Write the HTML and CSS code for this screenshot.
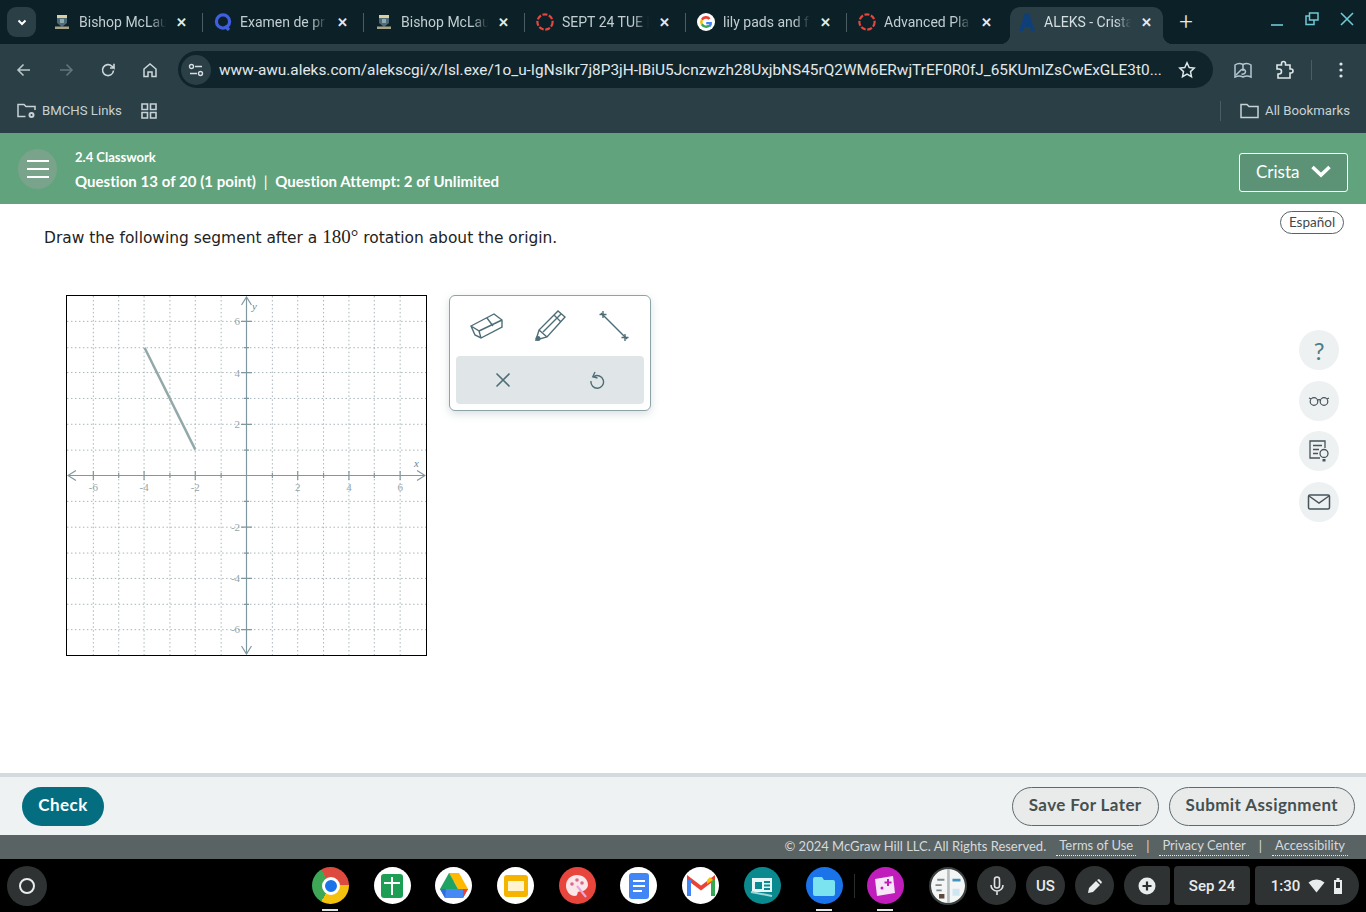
FILE: index.html
```html
<!DOCTYPE html>
<html lang="en">
<head>
    <meta charset="UTF-8">
    <meta name="viewport" content="width=device-width, initial-scale=1.0">
    <title>ALEKS - Crista</title>
    <link rel="stylesheet" href="styles.css">
</head>
<body>
    <!-- browser tabs -->
    <div class="tabstrip">
        <button class="tab-search"><svg width="12" height="12" viewBox="0 0 12 12"><path d="M2.500 4.500 6 8l3.500-3.500" fill="none" stroke="#fff" stroke-width="2"/></svg></button>
        <div class="tab">
            <svg class="favicon" viewBox="0 0 16 16"><path d="M3 1h10v8l-5 4-5-4z" fill="#4d6a78"/><path d="M3 1h10v3H3z" fill="#d8d0a0"/><path d="M6 5h4v4H6z" fill="#8fa7b0"/><path d="M1 12.500h14v2.500H1z" fill="#a8a487"/></svg>
            <span class="tab-title">Bishop McLau</span>
            <span class="tab-close">✕</span><i class="tab-sep"></i>
        </div>
        <div class="tab">
            <svg class="favicon big" viewBox="0 0 18 18"><circle cx="9" cy="8.500" r="6.600" fill="none" stroke="#3f5fe0" stroke-width="3.200"/><path d="M11 13l4 4" stroke="#3f5fe0" stroke-width="3.200"/></svg>
            <span class="tab-title">Examen de pr</span>
            <span class="tab-close">✕</span><i class="tab-sep"></i>
        </div>
        <div class="tab">
            <svg class="favicon" viewBox="0 0 16 16"><path d="M3 1h10v8l-5 4-5-4z" fill="#4d6a78"/><path d="M3 1h10v3H3z" fill="#d8d0a0"/><path d="M6 5h4v4H6z" fill="#8fa7b0"/><path d="M1 12.500h14v2.500H1z" fill="#a8a487"/></svg>
            <span class="tab-title">Bishop McLau</span>
            <span class="tab-close">✕</span><i class="tab-sep"></i>
        </div>
        <div class="tab">
            <svg class="favicon big" viewBox="0 0 18 18"><circle cx="9" cy="9" r="7.600" fill="none" stroke="#e8453c" stroke-width="2.200" stroke-dasharray="5 1.600"/></svg>
            <span class="tab-title">SEPT 24 TUE |</span>
            <span class="tab-close">✕</span><i class="tab-sep"></i>
        </div>
        <div class="tab">
            <svg class="favicon big" viewBox="0 0 18 18"><circle cx="9" cy="9" r="9" fill="#fff"/><path d="M13.600 5.200A6 6 0 0 0 3.900 6l2 1.500a3.500 3.500 0 0 1 5.600-.7z" fill="#ea4335"/><path d="M3.900 6a6 6 0 0 0 0 6l2-1.500a3.500 3.500 0 0 1 0-3z" fill="#fbbc05"/><path d="M3.900 12a6 6 0 0 0 9.300 1.200l-1.900-1.500a3.500 3.500 0 0 1-5.400-1.200z" fill="#34a853"/><path d="M15 9H9.200v2.200h3.200a3 3 0 0 1-1.100 1.500l1.900 1.500A6 6 0 0 0 15 9z" fill="#4285f4"/></svg>
            <span class="tab-title">lily pads and f</span>
            <span class="tab-close">✕</span><i class="tab-sep"></i>
        </div>
        <div class="tab">
            <svg class="favicon big" viewBox="0 0 18 18"><circle cx="9" cy="9" r="7.600" fill="none" stroke="#e8453c" stroke-width="2.200" stroke-dasharray="5 1.600"/></svg>
            <span class="tab-title">Advanced Pla</span>
            <span class="tab-close">✕</span>
        </div>
        <div class="tab active">
            <svg class="favicon big" viewBox="0 0 18 18"><path d="M7 0h4l6 18h-4l-1-4H6l-1 4H1z" fill="#0f3f78"/></svg>
            <span class="tab-title">ALEKS - Crista</span>
            <span class="tab-close">✕</span>
        </div>
        <span class="new-tab">+</span>
        <div class="win-controls">
            <svg width="14" height="14" viewBox="0 0 14 14"><path d="M1 13h12" stroke="#6fc9d6" stroke-width="1.600"/></svg>
            <svg width="14" height="14" viewBox="0 0 14 14"><path d="M4.500 1h8.500v7H4.500zM4.500 4H1v8.500h8V8" fill="none" stroke="#6fc9d6" stroke-width="1.500"/></svg>
            <svg width="14" height="14" viewBox="0 0 14 14"><path d="M1 1l12 12M13 1 1 13" stroke="#6fc9d6" stroke-width="1.600"/></svg>
        </div>
    </div>

    <!-- address bar -->
    <div class="toolbar">
        <svg class="nav-icon" viewBox="0 0 18 18"><path d="M15 9H3.500M8.500 3.500 3 9l5.500 5.500" fill="none" stroke="#b9c6ca" stroke-width="1.600"/></svg>
        <svg class="nav-icon" viewBox="0 0 18 18"><path d="M3 9h11.500M9.500 3.500 15 9l-5.500 5.500" fill="none" stroke="#62757b" stroke-width="1.600"/></svg>
        <svg class="nav-icon" viewBox="0 0 18 18"><path d="M14.500 9.500a5.500 5.500 0 1 1-1.600-4.300L15 7V2.800M15 7h-4" fill="none" stroke="#cdd7da" stroke-width="1.600"/></svg>
        <svg class="nav-icon" viewBox="0 0 18 18"><path d="M3 8l6-5 6 5v7.500h-4V11H7v4.500H3z" fill="none" stroke="#cdd7da" stroke-width="1.500"/></svg>
        <div class="urlbar">
            <span class="site-info"><svg width="16" height="16" viewBox="0 0 16 16"><path d="M7 4.500h7M2 11.500h7" stroke="#d5dee0" stroke-width="1.500"/><circle cx="3.500" cy="4.500" r="2" fill="none" stroke="#d5dee0" stroke-width="1.400"/><circle cx="12.500" cy="11.500" r="2" fill="none" stroke="#d5dee0" stroke-width="1.400"/></svg></span>
            <span class="url">www-awu.aleks.com/alekscgi/x/Isl.exe/1o_u-IgNsIkr7j8P3jH-lBiU5Jcnzwzh28UxjbNS45rQ2WM6ERwjTrEF0R0fJ_65KUmlZsCwExGLE3t0...</span>
            <svg class="star" width="18" height="18" viewBox="0 0 18 18"><path d="M9 1.800l2.200 4.700 5 .6-3.700 3.500 1 5.100L9 13.200l-4.500 2.500 1-5.100L1.800 7.100l5-.6z" fill="none" stroke="#dfe7e9" stroke-width="1.500"/></svg>
        </div>
        <svg class="tool-icon first" viewBox="0 0 20 20"><path d="M2 5c3-2 5-2 8-.5 3-1.500 5-1.500 8 .5v12c-3-1.500-5-1.500-8 0-3-1.500-5-1.500-8 0z" fill="none" stroke="#b3c7d2" stroke-width="1.500"/><path d="M10 4.500V11M3 15l5-5c1.500-1.500 4-1 4.500 1.500 0 2-2 3-4 2.500" fill="none" stroke="#b3c7d2" stroke-width="1.500"/></svg>
        <svg class="tool-icon" viewBox="0 0 20 20"><path d="M3 5h4.500V3.500a2 2 0 0 1 4 0V5H16v4h1a2 2 0 0 1 0 4h-1v5H4v-4h1a2.500 2.500 0 0 0 0-5H3z" fill="none" stroke="#dfe7e9" stroke-width="1.600"/></svg>
        <i class="tool-sep"></i>
        <svg class="tool-icon menu" viewBox="0 0 20 20"><circle cx="10" cy="4" r="1.600" fill="#dfe7e9"/><circle cx="10" cy="10" r="1.600" fill="#dfe7e9"/><circle cx="10" cy="16" r="1.600" fill="#dfe7e9"/></svg>
    </div>

    <!-- bookmarks -->
    <div class="bookmarks">
        <svg class="bm-icon" viewBox="0 0 20 18"><path d="M9 14.500H1.500V2.500h6l2 2h9V8" fill="none" stroke="#c7d2d5" stroke-width="1.500"/><circle cx="15" cy="13" r="3" fill="#c7d2d5"/><circle cx="15" cy="13" r="1" fill="#2a3f46"/></svg>
        <span class="bm-label">BMCHS Links</span>
        <svg class="apps-icon" viewBox="0 0 16 16"><path d="M1 1h5.500v5.500H1zM9.500 1H15v5.500H9.500zM1 9.500h5.500V15H1zM9.500 9.500H15V15H9.500z" fill="none" stroke="#c7d2d5" stroke-width="1.600"/></svg>
        <i class="bm-sep"></i>
        <svg class="bm-icon" viewBox="0 0 20 18"><path d="M1.500 15.500V2.500h6l2 2h9v11z" fill="none" stroke="#c7d2d5" stroke-width="1.500"/></svg>
        <span class="bm-label">All Bookmarks</span>
    </div>

    <!-- aleks header -->
    <header class="app-header">
        <button class="hamburger"><i></i><i></i><i></i></button>
        <div class="head-text">
            <div class="head-small">2.4 Classwork</div>
            <div class="head-main">Question 13 of 20 (1 point) <span class="pipe">|</span> Question Attempt: 2 of Unlimited</div>
        </div>
        <button class="user-btn">Crista
            <svg width="22" height="14" viewBox="0 0 22 14"><path d="M2.500 3 11 11l8.500-8" fill="none" stroke="#fff" stroke-width="3.600"/></svg>
        </button>
    </header>

    <main class="content">
        <div class="question">
            <p class="prompt">Draw the following segment after a <span class="math">180°</span> rotation about the origin.</p>
            <div class="work">
                <svg class="graph" width="361" height="361" viewBox="0 0 361 361">
                    <path class="grid" d="M26.500 0V361M52 0V361M77.500 0V361M103.500 0V361M129 0V361M155 0V361M206.500 0V361M232 0V361M258 0V361M283.500 0V361M309 0V361M335 0V361"/>
                    <path class="grid" d="M0 25.500H361M0 52H361M0 77H361M0 103H361M0 129H361M0 155H361M0 206.500H361M0 232.500H361M0 258.500H361M0 284H361M0 310H361M0 335.500H361"/>
                    <path class="axis" d="M1 180.500H360M180.500 1V360"/>
                    <path class="axis" d="M9 175.500 1 180.500 9 185.500M352 175.500 360 180.500 352 185.500M175.500 9 180.500 1 185.500 9M175.500 352 180.500 360 185.500 352"/>
                    <path class="axis" d="M26.500 176V185M77.500 176V185M129 176V185M232 176V185M283.500 176V185M335 176V185M175 25.500H186M175 77H186M175 129H186M175 232.500H186M175 284H186M175 335.500H186"/>
                    <path class="axis" d="M52 178V183M103.500 178V183M155 178V183M206.500 178V183M258 178V183M309 178V183M178 52H183M178 103H183M178 155H183M178 206.500H183M178 258.500H183M178 310H183"/>
                    <path class="segment" d="M78 52 129 154.500"/>
                    <g class="tick-labels">
                        <text x="26.500" y="196">-6</text><text x="77.500" y="196">-4</text><text x="129" y="196">-2</text>
                        <text x="232" y="196">2</text><text x="283.500" y="196">4</text><text x="335" y="196">6</text>
                        <text class="y-label" x="174" y="29">6</text><text class="y-label" x="174" y="81">4</text><text class="y-label" x="174" y="133">2</text>
                        <text class="y-label" x="174" y="236">-2</text><text class="y-label" x="174" y="288">-4</text><text class="y-label" x="174" y="339">-6</text>
                    </g>
                    <text class="axis-name" x="186" y="14">y</text>
                    <text class="axis-name" x="349" y="172">x</text>
                </svg>
                <div class="tools">
                    <div class="tool-row">
                        <svg width="34" height="28" viewBox="0 0 34 28"><path d="M1 14 24 2l8 6v7L11 26l-6-3zM1 14l8 5 2 7M9 19l23-11M17 6l6 8" fill="none" stroke="#4d6e78" stroke-width="1.400"/></svg>
                        <svg width="34" height="34" viewBox="0 0 34 34"><path d="M2 31l3-10L24 2l7 6-18 20zM5 21l8 7M9 23 27 5M20 6l7 7" fill="none" stroke="#4d6e78" stroke-width="1.400"/><circle cx="4" cy="29.500" r="2.500" fill="#4d6e78"/></svg>
                        <svg width="32" height="32" viewBox="0 0 32 32"><path d="M3 3 29 29" stroke="#4d6e78" stroke-width="1.400"/><path d="M5 1v7M1.500 4.500h7M27 24v7M23.500 27.500h7" stroke="#4d6e78" stroke-width="1.400"/></svg>
                    </div>
                    <div class="tool-actions">
                        <svg width="16" height="16" viewBox="0 0 16 16"><path d="M1.500 1.500l13 13M14.500 1.500l-13 13" stroke="#4d6e78" stroke-width="1.600"/></svg>
                        <svg width="16" height="18" viewBox="0 0 16 18"><path d="M5 5.500a6.300 6.300 0 1 1-3 4.500M6 1 3.800 5.800 8.500 7" fill="none" stroke="#4d6e78" stroke-width="1.400"/></svg>
                    </div>
                </div>
            </div>
        </div>
        <aside class="side">
            <span class="lang">Español</span>
            <div class="side-icons">
                <span class="round-icon help">?</span>
                <span class="round-icon"><svg width="22" height="12" viewBox="0 0 22 12"><path d="M1 3l2 1M21 3l-2 1M9 5.500c1.300-1 2.700-1 4 0" fill="none" stroke="#46555a" stroke-width="1.200"/><circle cx="6" cy="6.500" r="3.800" fill="none" stroke="#46555a" stroke-width="1.200"/><circle cx="16" cy="6.500" r="3.800" fill="none" stroke="#46555a" stroke-width="1.200"/></svg></span>
                <span class="round-icon"><svg width="22" height="24" viewBox="0 0 22 24"><path d="M12 19H2V2h15v7M5 6.500h9M5 10.500h6M5 14.500h5" fill="none" stroke="#46555a" stroke-width="1.300"/><circle cx="16" cy="14.500" r="4" fill="none" stroke="#46555a" stroke-width="1.300"/><path d="M14.500 20h3v2.500h-3z" fill="#46555a"/></svg></span>
                <span class="round-icon"><svg width="24" height="18" viewBox="0 0 24 18"><rect x="1.500" y="2" width="21" height="14" rx="1.500" fill="none" stroke="#46555a" stroke-width="1.500"/><path d="M2 3l10 7 10-7" fill="none" stroke="#46555a" stroke-width="1.500"/></svg></span>
            </div>
        </aside>
    </main>

    <div class="action-bar">
        <button class="btn-check">Check</button>
        <button class="btn-plain save">Save For Later</button>
        <button class="btn-plain">Submit Assignment</button>
    </div>

    <footer class="legal">
        <span>© 2024 McGraw Hill LLC. All Rights Reserved.</span>
        <a>Terms of Use</a><span class="bar">|</span><a>Privacy Center</a><span class="bar">|</span><a>Accessibility</a>
    </footer>

    <!-- chromeos shelf -->
    <div class="shelf">
        <span class="launcher"><i></i></span>
        <div class="apps">
            <span class="app running chrome"><i></i></span>
            <span class="app white"><svg width="26" height="26" viewBox="0 0 26 26"><rect x="2" y="1" width="22" height="24" rx="3" fill="#1e9e55"/><path d="M5 10h16M13 4v18" stroke="#fff" stroke-width="2"/></svg></span>
            <span class="app white"><svg width="30" height="27" viewBox="0 0 30 27"><path d="M10 1h10l-5 9-5-9z" fill="#1ea362"/><path d="M20 1l9 16H19L10 1z" fill="#ffba00"/><path d="M10 1l9 16H1z" fill="#1ea362"/><path d="M6 26h18l5-9H1z" fill="#4688f4"/><path d="M1 17h6l-1 9z" fill="#2d6fdc"/><path d="M29 17h-5v9z" fill="#ea4335"/></svg></span>
            <span class="app white"><svg width="26" height="26" viewBox="0 0 26 26"><rect x="1" y="2" width="24" height="22" rx="3" fill="#f4b400"/><rect x="5" y="8" width="16" height="10" fill="#fff3d0"/></svg></span>
            <span class="app palette"><svg width="26" height="26" viewBox="0 0 26 26"><path d="M13 2C6 2 2 7 2 13c0 5 4 10 9 10 3 0 2-3 3-4s5 0 7-2 3-3 3-5c0-6-5-10-11-10z" fill="#fbe6ea"/><circle cx="8" cy="11" r="1.800" fill="#d96a8b"/><circle cx="13" cy="7" r="1.800" fill="#d96a8b"/><circle cx="18" cy="10" r="1.800" fill="#d96a8b"/><path d="M13 13l9 11" stroke="#e7a6d8" stroke-width="2.200"/></svg></span>
            <span class="app white"><svg width="24" height="28" viewBox="0 0 24 28"><rect x="2" y="1" width="20" height="26" rx="3" fill="#4285f4"/><path d="M6 9h12M6 14h12M6 19h9" stroke="#fff" stroke-width="2.200"/></svg></span>
            <span class="app white"><svg width="28" height="24" viewBox="0 0 28 24"><path d="M2 22V5l12 9 12-9v17" fill="none" stroke="#ea4335" stroke-width="4"/><path d="M2 22V6" stroke="#4285f4" stroke-width="4"/><path d="M26 22V6" stroke="#34a853" stroke-width="4"/><path d="M26 6l-3-3-3 3v4l6-4z" fill="#fbbc04"/></svg></span>
            <span class="app teal"><svg width="26" height="22" viewBox="0 0 26 22"><path d="M3 3h20v14H3z" fill="#e7f5f6"/><path d="M6 7h7v7H6z" fill="#0a8a8f"/><path d="M15 7h6M15 10.500h6M15 14h6" stroke="#0a8a8f" stroke-width="2"/><path d="M2 17l21 4" stroke="#9fd6da" stroke-width="2"/></svg></span>
            <span class="app running files"><svg width="24" height="20" viewBox="0 0 24 20"><path d="M1 3a2 2 0 0 1 2-2h7l2 3h9a2 2 0 0 1 2 2v12a2 2 0 0 1-2 2H3a2 2 0 0 1-2-2z" fill="#7be2f0"/></svg></span>
            <i class="shelf-sep"></i>
            <span class="app running purple"><svg width="24" height="24" viewBox="0 0 24 24"><path d="M2 5l18-3 2 17-18 3z" fill="#f6e6f7"/><path d="M15 5v7M11.500 8.500h7" stroke="#c11dbc" stroke-width="2"/><circle cx="9" cy="14" r="1.500" fill="#c11dbc"/></svg></span>
            <span class="app thumb"><svg width="38" height="38" viewBox="0 0 38 38"><rect width="38" height="38" fill="#f4f6f6"/><rect x="18" width="3" height="38" fill="#b5bfc2"/><path d="M7 12h8M5 18h7M6 24h6" stroke="#7d8a8e" stroke-width="2"/><path d="M9 28h6v5H9z" fill="#5d4a3a"/><path d="M24 11h9v3h-9z" fill="#3f95c0"/><path d="M24 22h8v8h-8z" fill="#cfe6f1"/></svg></span>
        </div>
        <div class="status">
            <span class="pill"><svg width="16" height="20" viewBox="0 0 16 20"><rect x="5.500" y="1" width="5" height="11" rx="2.500" fill="none" stroke="#dfe3e4" stroke-width="1.600"/><path d="M2 9a6 6 0 0 0 12 0M8 15v4" fill="none" stroke="#dfe3e4" stroke-width="1.600"/></svg></span>
            <span class="pill">US</span>
            <span class="pill"><svg width="16" height="16" viewBox="0 0 16 16"><path d="M1 15l1-5 7-7 4 4-7 7z" fill="#e9ecec"/><path d="M10 2l2-1 3 3-1 2z" fill="#e9ecec"/></svg></span>
            <span class="pill plus"><svg width="18" height="18" viewBox="0 0 18 18"><circle cx="9" cy="9" r="8.500" fill="#e9ecec"/><path d="M9 4.500v9M4.500 9h9" stroke="#2b2f30" stroke-width="2.200"/></svg></span>
            <span class="pill date">Sep 24</span>
            <span class="pill clock">1:30
                <svg width="17" height="14" viewBox="0 0 17 14"><path d="M.5 3.500a12 12 0 0 1 16 0l-8 10z" fill="#e9ecec"/></svg>
                <svg width="10" height="16" viewBox="0 0 10 16"><path d="M3.500 0h3v2H9v14H1V2h2.500z" fill="#e9ecec"/><path d="M3 4h4v6H3z" fill="#2b2f30"/></svg>
            </span>
        </div>
    </div>
</body>
</html>
```

FILE: styles.css
```css
* {
    box-sizing: border-box;
}

html, body {
    height: 100%;
}

body {
    margin: 0;
    display: flex;
    flex-direction: column;
    height: 912px;
    overflow: hidden;
    font-family: "Roboto", "Liberation Sans", sans-serif;
    background: #fff;
}

button {
    font-family: inherit;
    cursor: pointer;
}

/* tabs */
.tabstrip {
    height: 44px;
    flex: none;
    display: flex;
    align-items: flex-end;
    padding-left: 7px;
    background: #0c2127;
    color: #c3ced1;
    font-size: 14px;
}

.tab-search {
    width: 29px;
    height: 30px;
    margin: 0 6px 7px 0;
    border: 0;
    padding: 0;
    border-radius: 9px;
    background: #2a3f46;
    display: flex;
    align-items: center;
    justify-content: center;
}

.tab {
    width: 161px;
    height: 37px;
    flex: none;
    display: flex;
    align-items: center;
    padding: 0 0 7px 12px;
    position: relative;
}

.favicon {
    width: 16px;
    height: 16px;
    flex: none;
    margin-right: 9px;
}

.favicon.big {
    width: 18px;
    height: 18px;
    margin: 0 8px 0 -1px;
}

.tab-title {
    flex: none;
    width: 89px;
    white-space: nowrap;
    overflow: hidden;
    -webkit-mask-image: linear-gradient(to right, #000 80%, transparent 98%);
    mask-image: linear-gradient(to right, #000 80%, transparent 98%);
}

.tab-close {
    width: 12px;
    margin-left: 7px;
    flex: none;
    font-size: 13px;
    font-weight: 700;
    line-height: 1;
    color: #e4eaec;
    text-align: center;
}

.tab-sep {
    width: 2px;
    height: 19px;
    margin-left: 15px;
    background: #4a5d63;
}

.tab.active {
    width: 153px;
    margin-left: 2px;
    padding-left: 9px;
    background: #2a3f46;
    border-radius: 10px 10px 0 0;
    color: #d5dee0;
}

.tab.active::before,
.tab.active::after {
    content: "";
    position: absolute;
    bottom: 0;
    width: 10px;
    height: 10px;
}

.tab.active::before {
    left: -10px;
    background: radial-gradient(circle at 0 0, transparent 10px, #2a3f46 10.5px);
}

.tab.active::after {
    right: -10px;
    background: radial-gradient(circle at 100% 0, transparent 10px, #2a3f46 10.5px);
}

.new-tab {
    width: 46px;
    height: 37px;
    text-align: center;
    font-size: 24px;
    font-weight: 300;
    line-height: 30px;
    color: #e4eaec;
}

.win-controls {
    margin-left: auto;
    height: 44px;
    display: flex;
    align-items: center;
    gap: 21px;
    padding: 0 12px 7px 0;
}

/* address bar */
.toolbar {
    height: 45px;
    flex: none;
    display: flex;
    align-items: center;
    padding: 6px 0 0 15px;
    background: #2a3f46;
}

.nav-icon {
    width: 18px;
    height: 18px;
    margin-right: 24px;
    flex: none;
}

.urlbar {
    width: 1035px;
    height: 37px;
    margin-left: -5px;
    flex: none;
    display: flex;
    align-items: center;
    padding: 0 17px 0 3px;
    border-radius: 19px;
    background: #10252b;
    color: #e3e9eb;
}

.site-info {
    width: 30px;
    height: 30px;
    flex: none;
    display: flex;
    align-items: center;
    justify-content: center;
    margin-right: 8px;
    border-radius: 50%;
    background: #2a3f46;
}

.url {
    flex: 1;
    font-size: 15.380px;
    white-space: nowrap;
}

.star {
    flex: none;
}

.tool-icon {
    width: 20px;
    height: 20px;
    flex: none;
}

.tool-icon.first {
    margin: 0 21px 0 20px;
}

.tool-sep {
    width: 1px;
    height: 20px;
    margin: 0 20px 0 17px;
    background: #4a5d63;
}

.tool-icon.menu {
    margin-left: -1px;
}

/* bookmarks */
.bookmarks {
    height: 44px;
    flex: none;
    display: flex;
    align-items: center;
    padding: 0 16px 1px;
    background: #2a3f46;
    color: #c7d2d5;
    font-size: 13.200px;
}

.bm-icon {
    width: 21px;
    height: 18px;
    flex: none;
    margin-right: 5px;
}

.apps-icon {
    width: 16px;
    height: 16px;
    margin-left: 19px;
}

.bm-sep {
    width: 1px;
    height: 20px;
    margin: 0 18px 0 auto;
    background: #4a5d63;
}

/* aleks header */
.app-header {
    height: 71px;
    flex: none;
    display: flex;
    align-items: center;
    padding: 0 18px;
    background: #61a37c;
    color: #fff;
    font-family: "Lato", "Liberation Sans", sans-serif;
}

.hamburger {
    width: 39px;
    height: 40px;
    flex: none;
    display: flex;
    flex-direction: column;
    align-items: center;
    justify-content: center;
    gap: 6px;
    padding: 0;
    border: 0;
    border-radius: 50%;
    background: #79a48b;
}

.hamburger i {
    width: 22px;
    height: 2px;
    background: #fff;
}

.head-text {
    margin: 2px 0 0 18px;
}

.head-small {
    font-size: 13px;
    font-weight: 700;
    margin-bottom: 7px;
}

.head-main {
    font-size: 15px;
    font-weight: 700;
    letter-spacing: 0.04px;
}

.pipe {
    font-weight: 400;
    margin: 0 4px;
}

.user-btn {
    width: 109px;
    height: 39px;
    margin: 8px 0 0 auto;
    display: flex;
    align-items: center;
    justify-content: space-between;
    padding: 0 15px 3px 16px;
    border: 1px solid #fff;
    border-radius: 3px;
    background: #5c9376;
    color: #fff;
    font-family: inherit;
    font-size: 17px;
}

/* question area */
.content {
    flex: 1;
    display: flex;
    justify-content: space-between;
    padding: 7px 22px 0 44px;
}

.prompt {
    margin: 14px 0 45px;
    font-family: "DejaVu Sans", "Liberation Sans", sans-serif;
    font-size: 15.450px;
    line-height: 24px;
    color: #222;
}

.math {
    font-family: "Liberation Serif", serif;
    font-size: 19px;
}

.work {
    display: flex;
    align-items: flex-start;
    margin-left: 22px;
    gap: 22px;
}

.graph {
    display: block;
    box-sizing: content-box;
    width: 359px;
    height: 359px;
    border: 1px solid #000;
}

.grid {
    fill: none;
    stroke: #a7b5b8;
    stroke-width: 1;
    stroke-dasharray: 1.500 2.500;
}

.axis {
    fill: none;
    stroke: #7f979e;
    stroke-width: 1.200;
}

.segment {
    stroke: #93a8a9;
    stroke-width: 2.500;
}

.tick-labels text {
    font-family: "Liberation Serif", serif;
    font-size: 11px;
    fill: #95a4a8;
    text-anchor: middle;
}

.tick-labels .y-label {
    text-anchor: end;
}

.axis-name {
    font-family: "Liberation Serif", serif;
    font-size: 11px;
    font-style: italic;
    fill: #71878d;
}

.tools {
    width: 202px;
    height: 116px;
    padding: 0 6px;
    border: 1px solid #8ca3a8;
    border-radius: 6px;
    background: #fff;
    box-shadow: 0 3px 8px rgba(80, 110, 120, 0.22);
}

.tool-row {
    height: 60px;
    display: flex;
    align-items: center;
    justify-content: space-between;
    padding: 0 14px 0 14px;
}

.tool-actions {
    height: 48px;
    display: flex;
    align-items: center;
    justify-content: space-around;
    border-radius: 4px;
    background: #e0e6e8;
}

.side {
    display: flex;
    flex-direction: column;
    align-items: flex-end;
}

.lang {
    width: 64px;
    height: 23px;
    text-align: center;
    line-height: 21px;
    border: 1px solid #566266;
    border-radius: 12px;
    font-family: "Lato", "Liberation Sans", sans-serif;
    font-size: 13.500px;
    color: #3f494c;
}

.side-icons {
    width: 40px;
    margin: 96px 5px 0 0;
    display: flex;
    flex-direction: column;
    gap: 10.500px;
}

.round-icon {
    width: 40px;
    height: 40px;
    display: flex;
    align-items: center;
    justify-content: center;
    border-radius: 50%;
    background: #eef1f1;
    color: #4c7d88;
}

.round-icon.help {
    font-family: "Lato", sans-serif;
    font-size: 24px;
}

/* bottom bar */
.action-bar {
    height: 62px;
    flex: none;
    display: flex;
    align-items: center;
    padding: 0 11px 0 22px;
    border-top: 4px solid #d3dbde;
    background: #eef2f3;
}

.btn-check {
    width: 82px;
    height: 39px;
    margin-right: auto;
    padding: 0 0 4px;
    border: 0;
    border-radius: 20px;
    background: #046e80;
    color: #fff;
    font-family: "Lato", sans-serif;
    font-size: 17px;
    font-weight: 700;
    letter-spacing: 0.5px;
}

.btn-plain {
    height: 39px;
    padding: 0 16px 4px;
    border: 1px solid #5f6a6d;
    border-radius: 20px;
    background: #e9ebeb;
    color: #46504f;
    font-family: "Lato", sans-serif;
    font-size: 17px;
    font-weight: 700;
    letter-spacing: 0.4px;
}

.btn-plain.save {
    margin-right: 10px;
}

.legal {
    height: 24px;
    flex: none;
    display: flex;
    align-items: center;
    justify-content: flex-end;
    padding: 0 18px 2px 0;
    background: #5a6364;
    color: #d5dadb;
    font-family: "Lato", sans-serif;
    font-size: 13px;
}

.legal a {
    margin-left: 10px;
    padding: 0 3px 2px;
    border-bottom: 1px dotted #e6eaea;
}

.legal .bar {
    margin-left: 10px;
}

/* shelf */
.shelf {
    height: 53px;
    flex: none;
    display: flex;
    align-items: center;
    padding: 0 7px;
    background: #000;
    color: #e9ecec;
}

.launcher {
    width: 40px;
    height: 40px;
    flex: none;
    display: flex;
    align-items: center;
    justify-content: center;
    border-radius: 50%;
    background: #2e3233;
}

.launcher i {
    width: 16px;
    height: 16px;
    border: 2px solid #e9ecec;
    border-radius: 50%;
}

.apps {
    display: flex;
    align-items: center;
    gap: 24.700px;
    margin-left: 265px;
}

.app {
    width: 37px;
    height: 37px;
    flex: none;
    display: flex;
    align-items: center;
    justify-content: center;
    border-radius: 50%;
    position: relative;
}

.app.running::after {
    content: "";
    position: absolute;
    left: 10px;
    bottom: -7px;
    width: 16px;
    height: 2px;
    background: #dfe3e4;
}

.app.white {
    background: #fff;
}

.chrome {
    background: conic-gradient(#dd4b3e 0 90deg, #f4c20d 90deg 210deg, #3da755 210deg 330deg, #dd4b3e 330deg);
}

.chrome i {
    width: 18px;
    height: 18px;
    border: 3px solid #fff;
    border-radius: 50%;
    background: #1a73e8;
}

.palette {
    background: #e8453c;
}

.teal {
    background: #0a8a8f;
}

.files {
    background: #1a73e8;
}

.purple {
    background: #c11dbc;
}

.thumb {
    width: 38px;
    height: 38px;
    overflow: hidden;
    border: 2px solid #3a3f40;
    margin-right: -15px;
}

.shelf-sep {
    width: 1px;
    height: 24px;
    margin: 0 -13px;
    background: #2a2d2e;
}

.status {
    margin-left: auto;
    display: flex;
    align-items: center;
    gap: 10px;
    font-size: 15px;
    font-weight: 500;
}

.pill {
    width: 39px;
    height: 39px;
    display: flex;
    align-items: center;
    justify-content: center;
    border-radius: 50%;
    background: #2e3233;
}

.pill.plus {
    width: 46px;
    margin-right: -6px;
    border-radius: 20px 4px 4px 20px;
}

.pill.date {
    width: 76px;
    border-radius: 4px;
}

.pill.clock {
    width: 104px;
    margin-left: -5px;
    gap: 8px;
    border-radius: 4px 20px 20px 4px;
}
```
